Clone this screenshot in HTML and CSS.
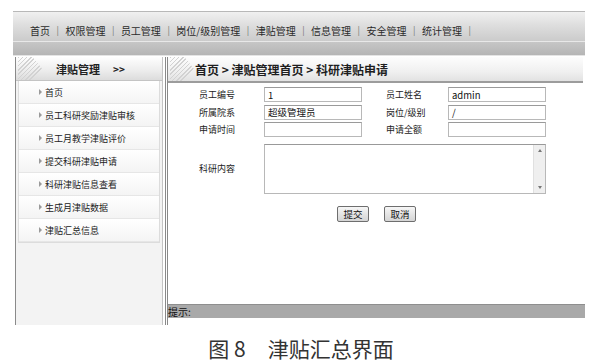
FILE: index.html
```html
<!DOCTYPE html>
<html lang="zh-CN">
<head>
<meta charset="utf-8">
<title>津贴汇总界面</title>
<link rel="stylesheet" href="styles.css">
</head>
<body>
<div class="frame">
  <div class="topbar">
    <nav class="nav">
      <span>首页</span><i>|</i><span>权限管理</span><i>|</i><span>员工管理</span><i>|</i><span>岗位/级别管理</span><i>|</i><span>津贴管理</span><i>|</i><span>信息管理</span><i>|</i><span>安全管理</span><i>|</i><span>统计管理</span><i>|</i>
    </nav>
    <div class="band"></div>
  </div>
  <div class="main">
    <aside class="side">
      <div class="side-head"><span class="hatch"></span><span class="side-title">津贴管理</span><span class="arrows">&gt;&gt;</span></div>
      <ul class="menu">
        <li>首页</li>
        <li>员工科研奖励津贴审核</li>
        <li>员工月教学津贴评价</li>
        <li>提交科研津贴申请</li>
        <li>科研津贴信息查看</li>
        <li>生成月津贴数据</li>
        <li>津贴汇总信息</li>
      </ul>
    </aside>
    <section class="content">
      <div class="crumb"><span class="hatch"></span><span class="crumb-text">首页 &gt; 津贴管理首页 &gt; 科研津贴申请</span></div>
      <div class="form">
        <label>员工编号</label><div class="field">1</div><span></span><label>员工姓名</label><div class="field">admin</div>
        <label>所属院系</label><div class="field">超级管理员</div><span></span><label>岗位/级别</label><div class="field">/</div>
        <label>申请时间</label><div class="field"></div><span></span><label>申请全额</label><div class="field"></div>
        <label class="tall">科研内容</label>
        <div class="area"><div class="scroll"><span class="up"></span><span class="down"></span></div></div>
      </div>
      <div class="actions"><button class="btn">提交</button><button class="btn">取消</button></div>
      <div class="status">提示:</div>
    </section>
  </div>
</div>
<div class="caption"><span>图 8</span><span>津贴汇总界面</span></div>
</body>
</html>
```

FILE: styles.css
```css
* { box-sizing: border-box; }
html, body { margin: 0; padding: 0; background: #fff; }
body {
  width: 600px;
  height: 364px;
  overflow: hidden;
  font-family: "Noto Sans CJK SC", "Noto Sans", sans-serif;
  color: #222;
}
.frame {
  margin: 11px 0 0 13px;
  width: 572px;
}
.topbar {
  height: 44px;
  border-top: 1px solid #b8b8b8;
  background: #c9c9c9;
  box-shadow: 0 1px 0 #e4e4e4;
}
.nav {
  height: 29px;
  display: flex;
  align-items: center;
  padding: 8px 0 0 17px;
  font-size: 10px;
  color: #2a2a2a;
  background: linear-gradient(#f0f0f0, #dedede 45%, #cbcbcb);
}
.nav i {
  font-style: normal;
  color: #777;
  margin: 0 6.5px;
  font-size: 9px;
}
.band {
  height: 14px;
  border-top: 1px solid #e8e8e8;
  background: linear-gradient(#c6c6c6, #b5b5b5);
}
.main {
  display: flex;
  margin-top: 2px;
  height: 268px;
}
.side {
  width: 148px;
  margin-left: 2px;
  border-left: 1px solid #8a8a8a;
  border-right: 1px solid #c4c4c4;
  background: #f3f3f3;
}
.side-head {
  height: 24px;
  display: flex;
  align-items: center;
  border-bottom: 1px solid #c4c4c4;
  background: linear-gradient(#fefefe, #ececec 60%, #dcdcdc);
  font-size: 11px;
  font-weight: bold;
  color: #222;
}
.hatch {
  width: 24px;
  height: 100%;
  margin-left: 2px;
  background: repeating-linear-gradient(135deg, #d2d2d2 0 1px, transparent 1px 3px);
  clip-path: polygon(0 0, 60% 0, 100% 50%, 60% 100%, 0 100%);
}
.side-title { margin-left: 14px; }
.arrows { margin-left: 13px; font-size: 10px; }
.menu {
  list-style: none;
  margin: 0 2px;
  padding: 0;
  border: 1px solid #dcdcdc;
  border-top: 0;
}
.menu li {
  height: 23px;
  display: flex;
  align-items: center;
  padding-left: 20px;
  font-size: 9px;
  color: #222;
  background: linear-gradient(#ffffff, #f4f4f4);
  border-bottom: 1px solid #e6e6e6;
}
.menu li::before {
  content: "";
  width: 0;
  height: 0;
  border-left: 3px solid #9a9a9a;
  border-top: 3px solid transparent;
  border-bottom: 3px solid transparent;
  margin-right: 3px;
}
.content {
  flex: 1;
  margin-left: 2px;
  border-left: 3px double #8a8a8a;
  display: flex;
  flex-direction: column;
}
.crumb {
  height: 26px;
  margin-right: 2px;
  display: flex;
  align-items: center;
  background: linear-gradient(#fdfdfd, #f0f0f0 60%, #e2e2e2);
  border-bottom: 2px solid #9c9c9c;
  font-size: 12px;
  font-weight: bold;
  color: #1e1e1e;
}
.crumb .hatch { margin-left: 2px; width: 24px; }
.crumb-text { margin-left: 1px; }
.form {
  display: grid;
  grid-template-columns: 65px 98px 24px 62px 98px;
  grid-auto-rows: 15px;
  row-gap: 2.5px;
  margin: 4px 0 0 31px;
  font-size: 9px;
}
.form label {
  display: flex;
  align-items: center;
  color: #222;
}
.field {
  border: 1px solid #b8b8b8;
  border-top-color: #9a9a9a;
  background: #fff;
  font-size: 9.5px;
  padding-left: 3px;
  display: flex;
  align-items: center;
  color: #111;
}
.form .tall {
  height: 50px;
  margin-top: 4px;
}
.area {
  grid-column: 2 / 6;
  height: 50px;
  margin-top: 4px;
  border: 1px solid #b8b8b8;
  border-top-color: #999;
  background: #fff;
  display: flex;
  justify-content: flex-end;
}
.scroll {
  width: 12px;
  height: 100%;
  background: #efefef;
  border-left: 1px solid #e0e0e0;
  display: flex;
  flex-direction: column;
  justify-content: space-between;
  align-items: center;
  padding: 4px 0;
}
.up, .down {
  width: 0; height: 0;
  border-left: 2px solid transparent;
  border-right: 2px solid transparent;
}
.up { border-bottom: 3px solid #777; }
.down { border-top: 3px solid #777; }
.actions {
  display: flex;
  justify-content: center;
  gap: 15px;
  margin-top: 51px;
}
.btn {
  width: 32px;
  height: 16px;
  padding: 0;
  font-family: inherit;
  font-size: 9.5px;
  color: #111;
  border: 1px solid #6e6e6e;
  border-radius: 2px;
  background: linear-gradient(#f6f6f6, #d4d4d4);
  line-height: 14px;
}
.status {
  margin-top: auto;
  margin-bottom: 7px;
  height: 14px;
  background: #a9a9a9;
  border-top: 1px solid #8e8e8e;
  font-size: 10px;
  line-height: 13px;
  color: #111;
}
.caption {
  margin-top: 11px;
  display: flex;
  justify-content: center;
  gap: 22px;
  font-size: 21px;
  line-height: 25px;
  color: #333;
  padding-left: 2px;
}
```
